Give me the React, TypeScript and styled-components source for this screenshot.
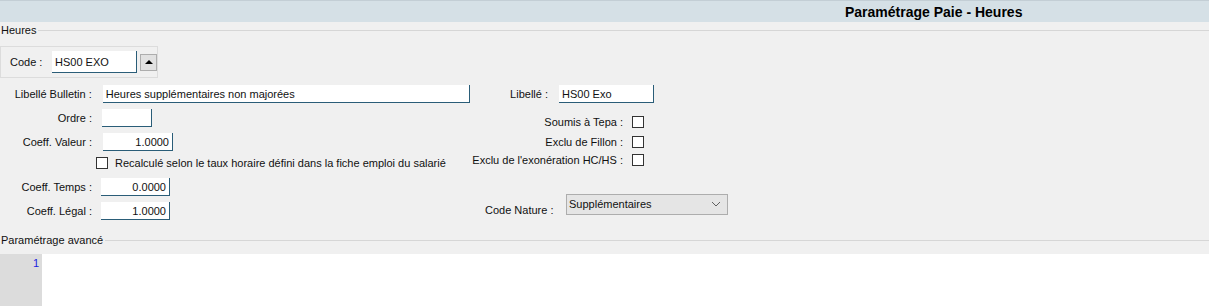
import styled, { createGlobalStyle } from "styled-components";

const GlobalStyle = createGlobalStyle`
  html, body {
    margin: 0;
    padding: 0;
    background: #f0f0f0;
    font-family: "Liberation Sans", Arial, sans-serif;
    font-size: 11px;
    color: #111;
  }
`;

const Page = styled.div`
  width: 1209px;
  height: 306px;
  overflow: hidden;
  display: flex;
  flex-direction: column;
  background: #f0f0f0;
`;

// bandeau du haut
const TitleBar = styled.div`
  height: 21px;
  border-top: 1px solid #c3ced5;
  background: #d5e0e6;
  display: flex;
  align-items: center;
  padding-left: 845px;
  font-weight: bold;
  font-size: 14px;
  color: #000;
`;

const Legend = styled.div<{ $top: number }>`
  display: flex;
  align-items: center;
  gap: 2px;
  height: 14px;
  padding-left: 1px;
  font-size: 11px;
  margin-top: ${(p) => p.$top}px;
  &::after {
    content: "";
    flex: 1;
    height: 1px;
    border-top: 1px solid #d6d6d6;
    margin-top: 1px;
  }
`;

const CodeBox = styled.div`
  margin-top: 9px;
  width: 158px;
  height: 32px;
  border: 1px solid #dcdcdc;
  display: flex;
  align-items: center;
  padding-left: 9px;
  box-sizing: border-box;
`;

const CodeLabel = styled.span`
  width: 42px;
`;

const Field = styled.div<{ $w: number; $h?: number; $right?: boolean }>`
  width: ${(p) => p.$w}px;
  height: ${(p) => p.$h ?? 18}px;
  box-sizing: border-box;
  background: #fff;
  border-right: 1px solid #2a5d78;
  border-bottom: 1px solid #2a5d78;
  display: flex;
  align-items: center;
  justify-content: ${(p) => (p.$right ? "flex-end" : "flex-start")};
  padding: 0 3px;
  white-space: nowrap;
`;

const ArrowBtn = styled.div`
  width: 17px;
  height: 17px;
  margin-left: 3px;
  box-sizing: border-box;
  background: #e1e1e1;
  border: 1px solid #adadad;
  display: flex;
  align-items: center;
  justify-content: center;
  &::before {
    content: "";
    border-left: 4px solid transparent;
    border-right: 4px solid transparent;
    border-bottom: 4px solid #000;
  }
`;

const Form = styled.div`
  display: flex;
  margin-top: 7px;
`;

const LeftCol = styled.div`
  width: 470px;
  display: flex;
  flex-direction: column;
`;

const RightCol = styled.div`
  display: flex;
  flex-direction: column;
`;

const Row = styled.div<{ $h: number; $top?: number }>`
  display: flex;
  align-items: center;
  height: ${(p) => p.$h}px;
  margin-top: ${(p) => p.$top ?? 0}px;
`;

const Label = styled.span<{ $w: number; $gap: number }>`
  width: ${(p) => p.$w}px;
  margin-right: ${(p) => p.$gap}px;
  text-align: right;
  white-space: nowrap;
`;

const NatureLabel = styled.span`
  width: 96px;
  box-sizing: border-box;
  padding: 10px 0 0 15px;
  white-space: nowrap;
`;

const Check = styled.span`
  width: 12px;
  height: 12px;
  box-sizing: border-box;
  border: 1px solid #333;
  background: #fff;
  flex-shrink: 0;
`;

const CheckRow = styled.div`
  display: flex;
  align-items: center;
  height: 19px;
  margin-top: 2px;
  padding-left: 96px;
  gap: 7px;
  white-space: nowrap;
`;

const Select = styled.div`
  width: 162px;
  height: 21px;
  box-sizing: border-box;
  background: #e5e5e5;
  border: 1px solid #adadad;
  display: flex;
  align-items: center;
  justify-content: space-between;
  padding: 0 6px 2px 2px;
`;

const Editor = styled.div`
  margin-top: 7px;
  flex: 1;
  display: flex;
  background: #fff;
`;

const Gutter = styled.div`
  width: 42px;
  background: #dcdcdc;
  color: #2020e0;
  text-align: right;
  padding: 3px 3px 0 0;
  box-sizing: border-box;
`;

const Chevron = () => (
  <svg width="10" height="6" viewBox="0 0 10 6">
    <path d="M1 1 L5 5 L9 1" fill="none" stroke="#606060" strokeWidth="1" />
  </svg>
);

export default function App() {
  return (
    <Page>
      <GlobalStyle />
      <TitleBar>Paramétrage Paie - Heures</TitleBar>
      <Legend $top={1}>Heures</Legend>
      <CodeBox>
        <CodeLabel>Code :</CodeLabel>
        <Field $w={85} $h={22}>HS00 EXO</Field>
        <ArrowBtn />
      </CodeBox>
      <Form>
        <LeftCol>
          <Row $h={18}>
            <Label $w={92} $gap={11}>Libellé Bulletin :</Label>
            <Field $w={368}>Heures supplémentaires non majorées</Field>
          </Row>
          <Row $h={18} $top={6}>
            <Label $w={92} $gap={10}>Ordre :</Label>
            <Field $w={50} />
          </Row>
          <Row $h={18} $top={6}>
            <Label $w={92} $gap={11}>Coeff. Valeur :</Label>
            <Field $w={70} $right>1.0000</Field>
          </Row>
          <CheckRow>
            <Check />
            Recalculé selon le taux horaire défini dans la fiche emploi du salarié
          </CheckRow>
          <Row $h={18} $top={6}>
            <Label $w={92} $gap={9}>Coeff. Temps :</Label>
            <Field $w={69} $right>0.0000</Field>
          </Row>
          <Row $h={18} $top={6}>
            <Label $w={92} $gap={9}>Coeff. Légal :</Label>
            <Field $w={69} $right>1.0000</Field>
          </Row>
        </LeftCol>
        <RightCol>
          <Row $h={18}>
            <Label $w={78} $gap={11}>Libellé :</Label>
            <Field $w={95}>HS00 Exo</Field>
          </Row>
          <Row $h={18} $top={10}>
            <Label $w={153} $gap={9}>Soumis à Tepa :</Label>
            <Check />
          </Row>
          <Row $h={18} $top={2}>
            <Label $w={153} $gap={9}>Exclu de Fillon :</Label>
            <Check />
          </Row>
          <Row $h={18} $top={0}>
            <Label $w={153} $gap={9}>Exclu de l'exonération HC/HS :</Label>
            <Check />
          </Row>
          <Row $h={21} $top={25}>
            <NatureLabel>Code Nature :</NatureLabel>
            <Select>
              Supplémentaires
              <Chevron />
            </Select>
          </Row>
        </RightCol>
      </Form>
      <Legend $top={13}>Paramétrage avancé</Legend>
      <Editor>
        <Gutter>1</Gutter>
      </Editor>
    </Page>
  );
}
